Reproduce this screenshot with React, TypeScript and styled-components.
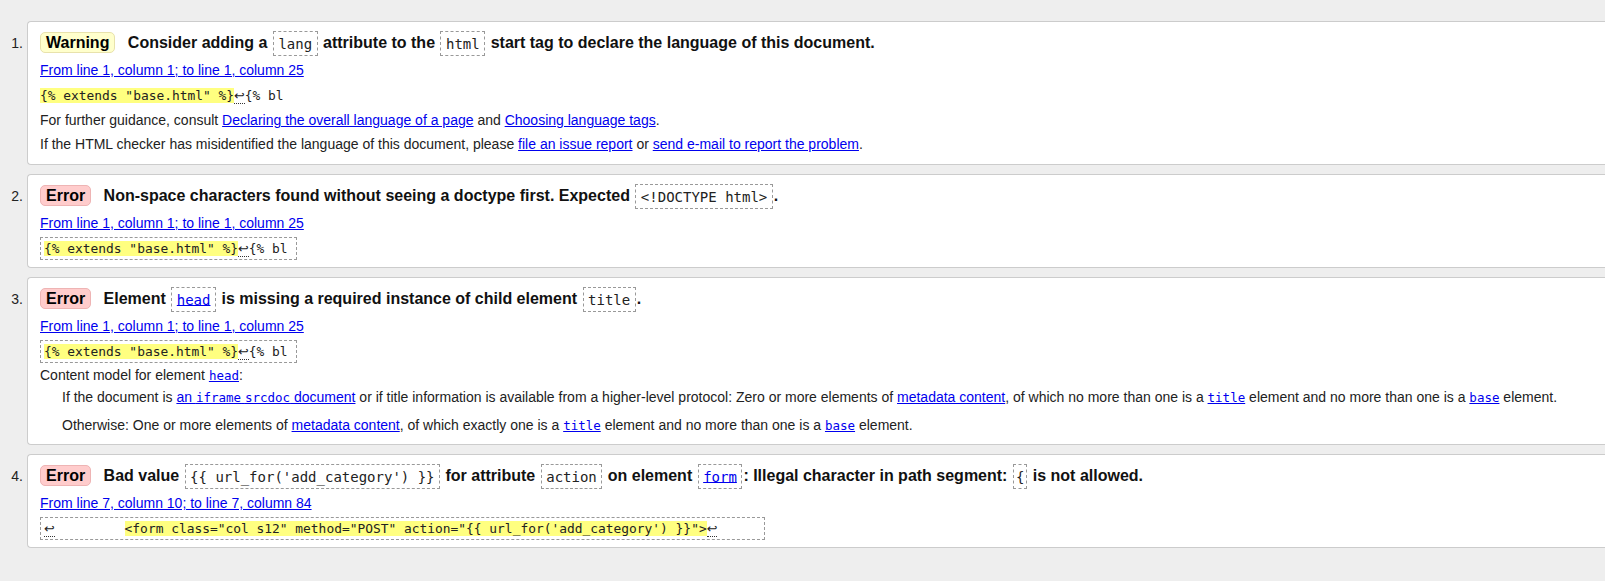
import React from 'react';
import styled, { createGlobalStyle } from 'styled-components';

const GlobalStyle = createGlobalStyle`
  html, body {
    margin: 0;
    padding: 0;
    background: #eeeeee;
    overflow-x: hidden;
  }
  body {
    font-family: "Liberation Sans", Arial, sans-serif;
    font-size: 14px;
    color: #222;
  }
`;

const MONO = '"DejaVu Sans Mono", "Liberation Mono", monospace';

const Page = styled.div`
  padding: 21px 0 20px;
`;

const List = styled.ol`
  list-style: none;
  margin: 0;
  padding: 0;
  display: flex;
  flex-direction: column;
  gap: 9px;
`;

const Row = styled.li`
  display: flex;
  align-items: baseline;
`;

const Num = styled.span`
  flex: 0 0 27px;
  box-sizing: border-box;
  padding-right: 4px;
  text-align: right;
  font-size: 14px;
  color: #222;
`;

const Box = styled.div<{ $tail?: number }>`
  flex: 1;
  background: #fff;
  border: 1px solid #cccccc;
  border-right: none;
  border-radius: 4px 0 0 4px;
  padding: 8px 12px ${(p) => p.$tail ?? 10}px;
  min-width: 0;
`;

const Heading = styled.p`
  margin: 0;
  font-size: 16px;
  font-weight: bold;
  line-height: 25px;
  color: #111;
`;

const Badge = styled.strong<{ $kind: 'warning' | 'error' }>`
  display: inline-block;
  padding: 0 5px;
  margin-right: 8px;
  height: 21px;
  line-height: 19px;
  box-sizing: border-box;
  border-radius: 5px;
  background: ${(p) => (p.$kind === 'warning' ? '#ffffcc' : '#ffcccc')};
  border: 1px solid ${(p) => (p.$kind === 'warning' ? '#e8e2ac' : '#eeb4b4')};
  color: #000;
`;

const Code = styled.code<{ $tight?: boolean }>`
  font-family: ${MONO};
  font-size: 14px;
  font-weight: normal;
  padding: 3.5px ${(p) => (p.$tight ? 2 : 4.5)}px;
  margin: 0 1px;
  border: 1px dashed #999;
  color: #222;
`;

const Link = styled.a`
  color: #0000ee;
  text-decoration: underline;
`;

const Mono = styled.code`
  font-family: ${MONO};
  font-size: 12.5px;
`;

const Location = styled.p`
  margin: 5.5px 0 0;
  line-height: 17px;
`;

const Extract = styled.p<{ $framed?: boolean }>`
  margin: 5.5px 0 0;
  display: table;
  padding: ${(p) => (p.$framed ? '3px 8px 3px 3px' : '4px 0')};
  border: ${(p) => (p.$framed ? '1px dashed #999' : 'none')};
  font-family: ${MONO};
  font-size: 12.9px;
  line-height: 15px;
  white-space: pre;
  color: #222;
`;

const Hl = styled.b`
  font-weight: normal;
  background: #ffff80;
`;

const Lf = styled.span`
  font-family: "DejaVu Sans", sans-serif;
  font-size: 12.8px;
  border-bottom: 1px dotted #333;
`;

const Info = styled.p`
  margin: 5px 0 0;
  line-height: 17px;
  & + & {
    margin-top: 7px;
  }
`;

const ModelTitle = styled.dt`
  margin: 4px 0 0;
  line-height: 17px;
`;

const ModelItem = styled.dd`
  margin: 2px 0 0 22px;
  line-height: 22px;
  & + & {
    margin-top: 5px;
  }
`;

const Model = styled.dl`
  margin: 0;
`;

const Arrow = () => <Lf>↩</Lf>;

const baseExtract = (
  <>
    <Hl>{'{% extends "base.html" %}'}</Hl>
    <Arrow />
    {'{% bl'}
  </>
);

const firstLoc = 'From line 1, column 1; to line 1, column 25';
const indent = '\u00a0'.repeat(9);
const trail = '\u00a0'.repeat(5);

export default function App() {
  return (
    <Page>
      <GlobalStyle />
      <List>
        <Row>
          <Num>1.</Num>
          <Box $tail={11}>
            <Heading>
              <Badge $kind="warning">Warning</Badge> Consider adding a <Code>lang</Code> attribute to the{' '}
              <Code>html</Code> start tag to declare the language of this document.
            </Heading>
            <Location><Link href="#">{firstLoc}</Link></Location>
            <Extract>{baseExtract}</Extract>
            <Info>
              For further guidance, consult <Link href="#">Declaring the overall language of a page</Link> and{' '}
              <Link href="#">Choosing language tags</Link>.
            </Info>
            <Info>
              If the HTML checker has misidentified the language of this document, please{' '}
              <Link href="#">file an issue report</Link> or <Link href="#">send e-mail to report the problem</Link>.
            </Info>
          </Box>
        </Row>

        <Row>
          <Num>2.</Num>
          <Box $tail={7}>
            <Heading>
              <Badge $kind="error">Error</Badge> Non-space characters found without seeing a doctype first. Expected{' '}
              <Code>{'<!DOCTYPE html>'}</Code>.
            </Heading>
            <Location><Link href="#">{firstLoc}</Link></Location>
            <Extract $framed>{baseExtract}</Extract>
          </Box>
        </Row>

        <Row>
          <Num>3.</Num>
          <Box $tail={7}>
            <Heading>
              <Badge $kind="error">Error</Badge> Element <Code><Link href="#">head</Link></Code> is missing a required
              instance of child element <Code>title</Code>.
            </Heading>
            <Location><Link href="#">{firstLoc}</Link></Location>
            <Extract $framed>{baseExtract}</Extract>
            <Model>
              <ModelTitle>
                Content model for element <Link href="#"><Mono>head</Mono></Link>:
              </ModelTitle>
              <ModelItem>
                If the document is <Link href="#">an <Mono>iframe</Mono> <Mono>srcdoc</Mono> document</Link> or if
                title information is available from a higher-level protocol: Zero or more elements of{' '}
                <Link href="#">metadata content</Link>, of which no more than one is a{' '}
                <Link href="#"><Mono>title</Mono></Link> element and no more than one is a{' '}
                <Link href="#"><Mono>base</Mono></Link> element.
              </ModelItem>
              <ModelItem>
                Otherwise: One or more elements of <Link href="#">metadata content</Link>, of which exactly one is
                a <Link href="#"><Mono>title</Mono></Link> element and no more than one is a{' '}
                <Link href="#"><Mono>base</Mono></Link> element.
              </ModelItem>
            </Model>
          </Box>
        </Row>

        <Row>
          <Num>4.</Num>
          <Box $tail={7}>
            <Heading>
              <Badge $kind="error">Error</Badge> Bad value <Code>{"{{ url_for('add_category') }}"}</Code> for
              attribute <Code>action</Code> on element <Code><Link href="#">form</Link></Code>: Illegal character in
              path segment: <Code $tight>{'{'}</Code> is not allowed.
            </Heading>
            <Location><Link href="#">From line 7, column 10; to line 7, column 84</Link></Location>
            <Extract $framed>
              <Arrow />
              {indent}
              <Hl>{'<form class="col s12" method="POST" action="{{ url_for(\'add_category\') }}">'}</Hl>
              <Arrow />
              {trail}
            </Extract>
          </Box>
        </Row>
      </List>
    </Page>
  );
}
